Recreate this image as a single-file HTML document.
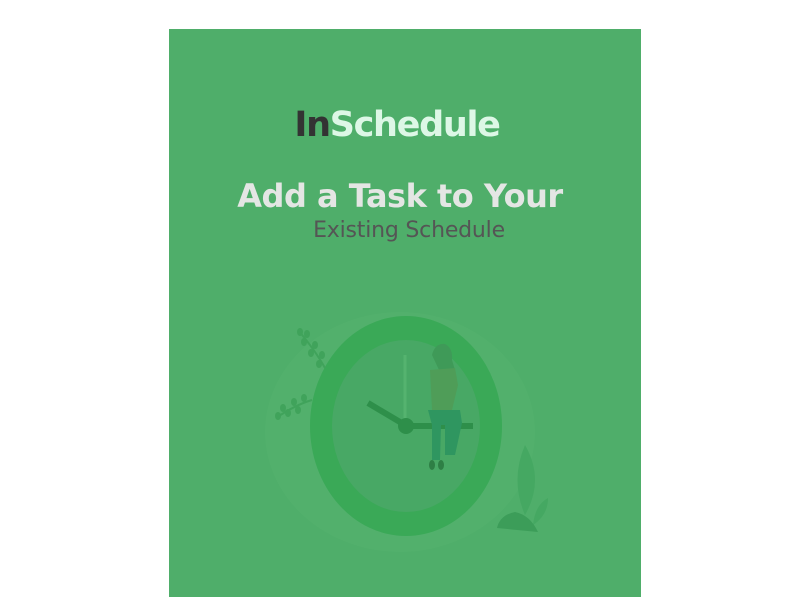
<!DOCTYPE html>
<html><head><style>
html,body{margin:0;padding:0;background:#fff;width:800px;height:600px;overflow:hidden}
.panel{position:absolute;left:169px;top:29px;width:472px;height:568px;background:#4fae6a}
.t{position:absolute;left:0;width:800px;text-align:center;font-family:"DejaVu Sans","Liberation Sans",sans-serif;white-space:nowrap}
</style></head><body>
<div class="t" style="top:0"></div>
<div class="panel"></div>
<div class="t" style="top:105px;left:-3px;font-size:35px;font-weight:bold;letter-spacing:-1.3px"><span style="color:#333">In</span><span style="color:#ddf7e6">Schedule</span></div>
<div class="t" style="top:177px;font-size:32px;font-weight:bold;color:#e4e6e4;letter-spacing:-0.5px">Add a Task to Your</div>
<div class="t" style="top:218px;left:9px;font-size:22px;color:#555;letter-spacing:-0.2px">Existing Schedule</div>
<svg style="position:absolute;left:0;top:0" width="800" height="600">
<ellipse cx="400" cy="432" rx="135" ry="120" fill="#52b06c"/>
<ellipse cx="406" cy="426" rx="96" ry="110" fill="#3aa957"/>
<ellipse cx="406" cy="426" rx="74" ry="86" fill="#48a865"/>
<line x1="405" y1="355" x2="405" y2="425" stroke="#55b36f" stroke-width="3"/>
<line x1="368" y1="403" x2="405" y2="425" stroke="#2e8f4a" stroke-width="6"/>
<line x1="405" y1="426" x2="473" y2="426" stroke="#2e8f4a" stroke-width="6"/>
<circle cx="406" cy="426" r="8" fill="#2e8f4a"/>
<path d="M432 355 Q435 343 445 344 Q453 348 452 360 L455 370 L440 372 Z" fill="#3f9a58"/>
<path d="M430 370 L455 368 L458 385 L452 410 L432 410 Z" fill="#4f9d58"/>
<path d="M428 410 L460 410 L462 423 L455 455 L445 455 L445 425 L432 425 Z" fill="#2f9660"/>
<path d="M432 425 L441 425 L440 460 L432 460 Z" fill="#2f9660"/>
<ellipse cx="432" cy="465" rx="3" ry="5" fill="#2e7f45"/>
<ellipse cx="441" cy="465" rx="3" ry="5" fill="#2e7f45"/>
<g fill="#40a35b">
<path d="M298 330 Q315 350 325 368" stroke="#40a35b" stroke-width="2" fill="none"/>
<ellipse cx="300" cy="332" rx="3" ry="4"/><ellipse cx="307" cy="334" rx="3" ry="4"/>
<ellipse cx="304" cy="342" rx="3" ry="4"/><ellipse cx="315" cy="345" rx="3" ry="4"/>
<ellipse cx="311" cy="353" rx="3" ry="4"/><ellipse cx="322" cy="355" rx="3" ry="4"/>
<ellipse cx="319" cy="364" rx="3" ry="4"/>
<path d="M276 418 Q295 405 312 400" stroke="#40a35b" stroke-width="2" fill="none"/>
<ellipse cx="278" cy="416" rx="3" ry="4"/><ellipse cx="283" cy="408" rx="3" ry="4"/>
<ellipse cx="288" cy="413" rx="3" ry="4"/><ellipse cx="294" cy="402" rx="3" ry="4"/>
<ellipse cx="298" cy="410" rx="3" ry="4"/><ellipse cx="304" cy="398" rx="3" ry="4"/>
</g>
<path d="M525 445 Q510 480 525 515 Q545 480 525 445Z" fill="#45a862"/>
<path d="M548 498 Q535 505 533 525 Q548 515 548 498Z" fill="#45a862"/>
<path d="M497 528 Q500 515 515 512 Q530 515 538 532 Z" fill="#3c9d59"/>
</svg>
</body></html>
